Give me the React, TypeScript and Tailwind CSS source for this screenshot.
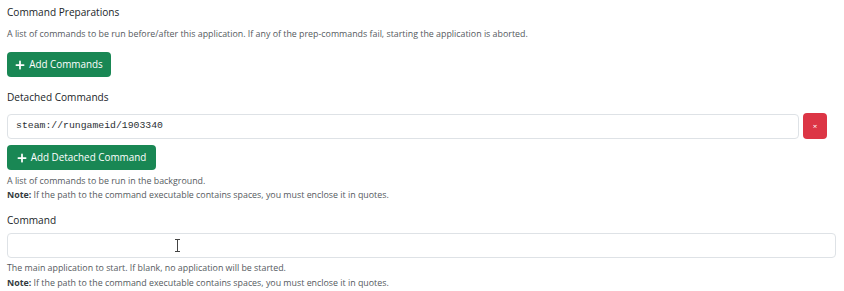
import React from 'react';

const sans = "font-['Open_Sans',sans-serif]";

function PlusIcon() {
  return (
    <svg className="w-[10px] h-[10px]" viewBox="0 0 16 16" fill="currentColor">
      <path d="M8 0.8a1.4 1.4 0 0 1 1.4 1.4v4.4h4.4a1.4 1.4 0 0 1 0 2.8H9.4v4.4a1.4 1.4 0 0 1-2.8 0V9.4H2.2a1.4 1.4 0 0 1 0-2.8h4.4V2.2A1.4 1.4 0 0 1 8 0.8z" />
    </svg>
  );
}

function Note() {
  return (
    <p className="leading-[14px]">
      <strong className="font-bold text-[#343a40]">Note:</strong> If the path to the command executable contains spaces, you
      must enclose it in quotes.
    </p>
  );
}

export default function App() {
  return (
    <div className={`${sans} bg-white w-[844px] h-[291px] pl-[7px] pr-[8px] pt-[4px] text-[#212529] overflow-hidden`}>
      {/* Command Preparations */}
      <div className="text-[10.1px] leading-[16px]">Command Preparations</div>
      <p className="mt-[8px] text-[8.85px] leading-[13px] text-[#555a5e]">
        A list of commands to be run before/after this application. If any of the prep-commands fail, starting the
        application is aborted.
      </p>
      <button className="mt-[11px] h-[25px] w-[104px] flex items-center justify-center gap-[4px] rounded-[4px] bg-[#198754] text-white text-[9.9px]">
        <PlusIcon />
        Add Commands
      </button>

      {/* Detached Commands */}
      <div className="mt-[12px] text-[10.1px] leading-[16px]">Detached Commands</div>
      <div className="mt-[8px] flex items-center gap-[4px]">
        <div className="flex-1 h-[25px] flex items-center px-[8px] border border-[#dee2e6] rounded-[4px] font-['Liberation_Mono',monospace] text-[9.8px] text-[#2b2f33]">
          steam://rungameid/1903340
        </div>
        <button className="h-[26px] w-[24px] rounded-[4px] bg-[#dc3545] text-white text-[8px] leading-none flex items-center justify-center">
          ×
        </button>
        <div className="w-[5px]" />
      </div>
      <button className="mt-[6px] h-[25px] w-[149px] flex items-center justify-center gap-[4px] rounded-[4px] bg-[#198754] text-white text-[9.9px]">
        <PlusIcon />
        Add Detached Command
      </button>
      <div className="mt-[4px] text-[8.85px] text-[#555a5e]">
        <p className="leading-[14px]">A list of commands to be run in the background.</p>
        <Note />
      </div>

      {/* Command */}
      <div className="mt-[10px] text-[10.1px] leading-[16px]">Command</div>
      <div className="mt-[5px] relative h-[25px] border border-[#dee2e6] rounded-[4px]">
        <svg className="absolute left-[166px] top-[5px] w-[7px] h-[13px]" viewBox="0 0 7 13" fill="none" stroke="#444" strokeWidth="1">
          <path d="M1 0.5h5M1 12.5h5M3.5 0.5v12" />
        </svg>
      </div>
      <div className="mt-[3px] text-[8.85px] text-[#555a5e]">
        <p className="leading-[15px]">The main application to start. If blank, no application will be started.</p>
        <Note />
      </div>
    </div>
  );
}
